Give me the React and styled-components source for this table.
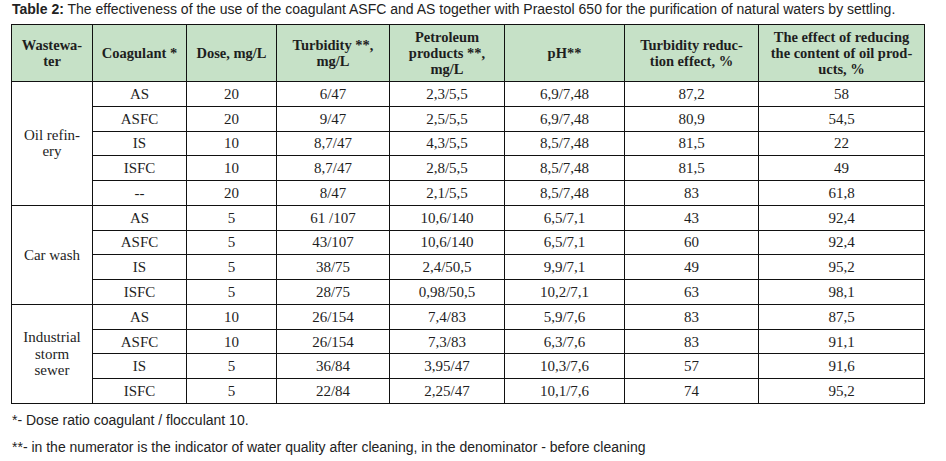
import React from "react";
import styled, { createGlobalStyle } from "styled-components";

const GlobalStyle = createGlobalStyle`
  html, body {
    margin: 0;
    padding: 0;
    background: #ffffff;
  }
`;

const Page = styled.div`
  width: 946px;
  height: 461px;
  padding: 0 0 0 11px;
  box-sizing: border-box;
  font-family: "Liberation Sans", Arial, sans-serif;
  color: #1f1f1f;
  overflow: hidden;
`;

const Caption = styled.div`
  font-size: 14px;
  line-height: 18px;
  padding: 0 0 0 1px;
  margin: 0 0 6px;
  white-space: nowrap;
  color: #222;

  b {
    font-weight: bold;
  }
`;

const Table = styled.table`
  border-collapse: collapse;
  table-layout: fixed;
  width: 913px;
  font-family: "Liberation Serif", "Times New Roman", serif;
  color: #1e1e1e;
`;

const HeadCell = styled.th`
  background: #c6e1c7;
  border: 1px solid #111;
  font-size: 14.5px;
  line-height: 16px;
  font-weight: bold;
  text-align: center;
  vertical-align: middle;
  padding: 0 4px;
  height: 56px;
`;

const Cell = styled.td`
  border: 1px solid #111;
  font-size: 15px;
  line-height: 16px;
  text-align: center;
  vertical-align: middle;
  padding: 0 4px;
  height: 23.77px;
`;

const GroupCell = styled(Cell)`
  line-height: 16.5px;
`;

const Notes = styled.div`
  display: flex;
  flex-direction: column;
  gap: 11px;
  margin-top: 8px;
  padding-left: 1px;
  font-size: 14px;
  line-height: 16px;
  color: #222;
`;

const widths = [81, 94, 90, 113, 115, 120, 134, 166];

const headers = [
  ["Wastewa-", "ter"],
  ["Coagulant *"],
  ["Dose, mg/L"],
  ["Turbidity **,", "mg/L"],
  ["Petroleum", "products **,", "mg/L"],
  ["pH**"],
  ["Turbidity reduc-", "tion effect, %"],
  ["The effect of reducing", "the content of oil prod-", "ucts, %"],
];

const groups = [
  {
    name: ["Oil refin-", "ery"],
    rows: [
      ["AS", "20", "6/47", "2,3/5,5", "6,9/7,48", "87,2", "58"],
      ["ASFC", "20", "9/47", "2,5/5,5", "6,9/7,48", "80,9", "54,5"],
      ["IS", "10", "8,7/47", "4,3/5,5", "8,5/7,48", "81,5", "22"],
      ["ISFC", "10", "8,7/47", "2,8/5,5", "8,5/7,48", "81,5", "49"],
      ["--", "20", "8/47", "2,1/5,5", "8,5/7,48", "83", "61,8"],
    ],
  },
  {
    name: ["Car wash"],
    rows: [
      ["AS", "5", "61 /107", "10,6/140", "6,5/7,1", "43", "92,4"],
      ["ASFC", "5", "43/107", "10,6/140", "6,5/7,1", "60", "92,4"],
      ["IS", "5", "38/75", "2,4/50,5", "9,9/7,1", "49", "95,2"],
      ["ISFC", "5", "28/75", "0,98/50,5", "10,2/7,1", "63", "98,1"],
    ],
  },
  {
    name: ["Industrial", "storm", "sewer"],
    rows: [
      ["AS", "10", "26/154", "7,4/83", "5,9/7,6", "83", "87,5"],
      ["ASFC", "10", "26/154", "7,3/83", "6,3/7,6", "83", "91,1"],
      ["IS", "5", "36/84", "3,95/47", "10,3/7,6", "57", "91,6"],
      ["ISFC", "5", "22/84", "2,25/47", "10,1/7,6", "74", "95,2"],
    ],
  },
];

function Lines({ parts }) {
  return parts.map((p, i) => (
    <React.Fragment key={i}>
      {i > 0 && <br />}
      {p}
    </React.Fragment>
  ));
}

export default function App() {
  return (
    <>
      <GlobalStyle />
      <Page>
        <Caption>
          <b>Table 2:</b> The effectiveness of the use of the coagulant ASFC
          and AS together with Praestol 650 for the purification of natural
          waters by settling.
        </Caption>
        <Table>
          <colgroup>
            {widths.map((w, i) => (
              <col key={i} style={{ width: w }} />
            ))}
          </colgroup>
          <thead>
            <tr>
              {headers.map((h, i) => (
                <HeadCell key={i}>
                  <Lines parts={h} />
                </HeadCell>
              ))}
            </tr>
          </thead>
          <tbody>
            {groups.map((g) =>
              g.rows.map((row, ri) => (
                <tr key={g.name.join() + ri}>
                  {ri === 0 && (
                    <GroupCell rowSpan={g.rows.length}>
                      <Lines parts={g.name} />
                    </GroupCell>
                  )}
                  {row.map((v, ci) => (
                    <Cell key={ci}>{v}</Cell>
                  ))}
                </tr>
              ))
            )}
          </tbody>
        </Table>
        <Notes>
          <div>*- Dose ratio coagulant / flocculant 10.</div>
          <div>
            **- in the numerator is the indicator of water quality after
            cleaning, in the denominator - before cleaning
          </div>
        </Notes>
      </Page>
    </>
  );
}
